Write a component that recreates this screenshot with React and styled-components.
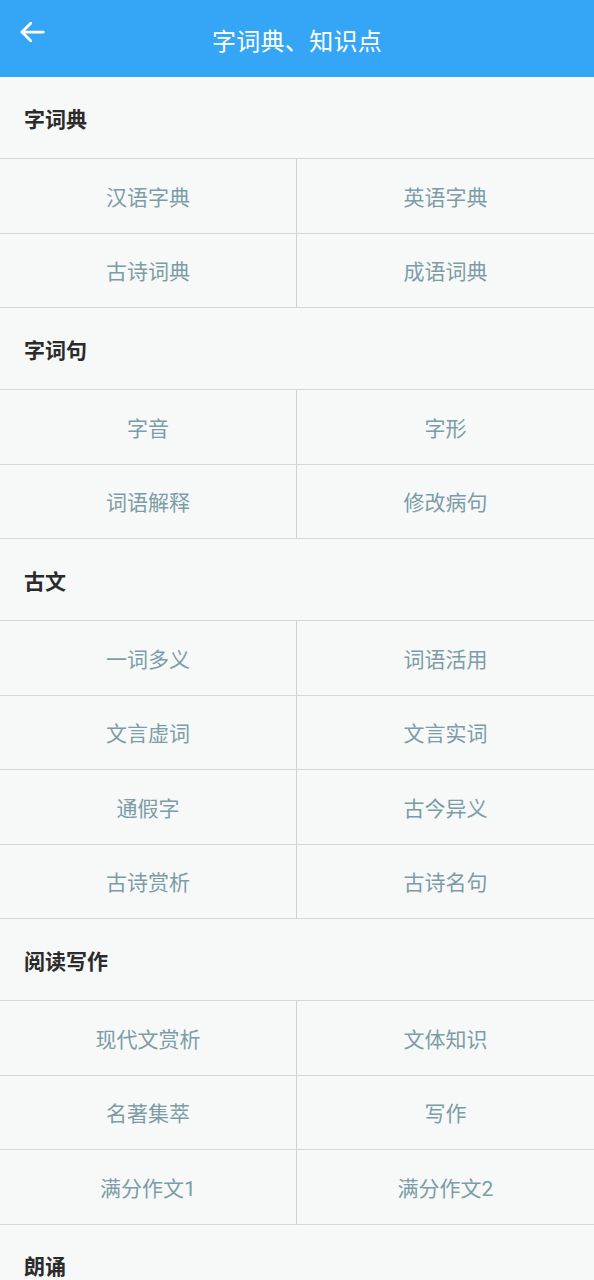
import React from 'react';
import styled, { createGlobalStyle } from 'styled-components';

const GlobalStyle = createGlobalStyle`
  html, body {
    margin: 0;
    padding: 0;
    background: #f7f8f8;
    font-family: Roboto, "Noto Sans CJK SC", sans-serif;
  }
`;

const sections = [
  { title: '字词典', items: ['汉语字典', '英语字典', '古诗词典', '成语词典'] },
  { title: '字词句', items: ['字音', '字形', '词语解释', '修改病句'] },
  {
    title: '古文',
    items: ['一词多义', '词语活用', '文言虚词', '文言实词', '通假字', '古今异义', '古诗赏析', '古诗名句'],
  },
  {
    title: '阅读写作',
    items: ['现代文赏析', '文体知识', '名著集萃', '写作', '满分作文1', '满分作文2'],
  },
  { title: '朗诵', items: [] },
];

const Page = styled.div`
  width: 594px;
  height: 1280px;
  overflow: hidden;
  background: #f7f8f8;
`;

const TopBar = styled.header`
  height: 77px;
  background: #35a6f6;
  display: flex;
  align-items: center;
  justify-content: center;
  position: relative;
  color: #fff;
`;

const BackButton = styled.button`
  position: absolute;
  left: 14px;
  top: 14px;
  width: 36px;
  height: 36px;
  padding: 0;
  border: none;
  background: transparent;
  display: flex;
  align-items: center;
  justify-content: center;
`;

const Title = styled.h1`
  margin: 0;
  font-size: 24px;
  font-weight: 400;
  letter-spacing: 0.3px;
  transform: translateY(1px);
`;

const SectionTitle = styled.div`
  height: 81px;
  box-sizing: border-box;
  padding-left: 24px;
  display: flex;
  align-items: center;
  font-size: 21px;
  font-weight: 700;
  color: #2b2b2b;
`;

const Grid = styled.div`
  display: grid;
  grid-template-columns: 297px 297px;
  border-top: 1px solid #d6d7d7;
`;

const Cell = styled.div`
  height: 74.5px;
  box-sizing: border-box;
  border-bottom: 1px solid #d6d7d7;
  border-right: ${(p) => (p.$left ? '1px solid #d0d1d1' : 'none')};
  display: flex;
  align-items: center;
  justify-content: center;
  font-size: 21px;
  color: #7c9da7;
  cursor: pointer;
`;

const BackArrow = () => (
  <svg width="30" height="30" viewBox="0 0 24 24" fill="none" stroke="#fff" strokeWidth="2.2" strokeLinecap="round" strokeLinejoin="round">
    <line x1="21" y1="12" x2="4" y2="12" />
    <polyline points="11 5 4 12 11 19" />
  </svg>
);

export default function App() {
  return (
    <Page>
      <GlobalStyle />
      <TopBar>
        <BackButton aria-label="back">
          <BackArrow />
        </BackButton>
        <Title>字词典、知识点</Title>
      </TopBar>
      {sections.map((s) => (
        <section key={s.title}>
          <SectionTitle>{s.title}</SectionTitle>
          {s.items.length > 0 && (
            <Grid>
              {s.items.map((it, i) => (
                <Cell key={it} $left={i % 2 === 0}>
                  {it}
                </Cell>
              ))}
            </Grid>
          )}
        </section>
      ))}
    </Page>
  );
}
